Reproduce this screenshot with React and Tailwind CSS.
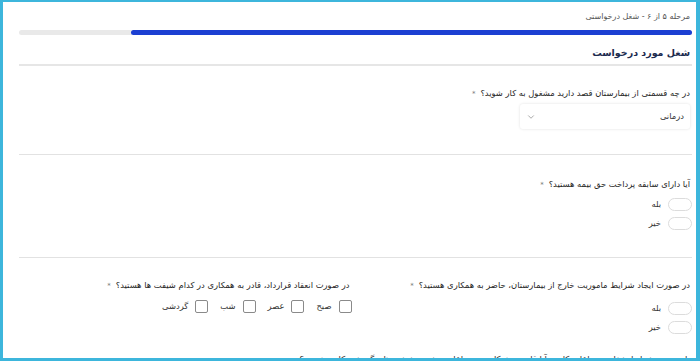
import React from "react";
import { ChevronDown } from "lucide-react";

const Star = () => <span className="text-[#777] text-[7px] mr-[5px]">*</span>;

function Question({ children }) {
  return (
    <div className="text-[8.4px] leading-[14px] text-[#262626] pr-[2px] whitespace-nowrap">
      {children}
      <Star />
    </div>
  );
}

function Radio({ label }) {
  return (
    <div className="h-[19px] flex items-center gap-[7px]">
      <span className="w-[24px] h-[13px] rounded-full border border-[#dcdcdc] bg-white" />
      <span className="text-[8.4px] text-[#333]">{label}</span>
    </div>
  );
}

function Check({ label }) {
  return (
    <div className="flex items-center gap-[7px]">
      <span className="w-[13px] h-[13px] rounded-[2px] border border-[#8a8a8a] bg-white" />
      <span className="text-[8.4px] text-[#333]">{label}</span>
    </div>
  );
}

export default function App() {
  return (
    <div
      dir="rtl"
      className="w-[700px] h-[361px] overflow-hidden bg-white border-solid border-[#3db6dc] border-l-[3px] border-t-[2px] border-r-[4px] border-b-[3px]"
      style={{ fontFamily: '"DejaVu Sans", "Noto Sans", sans-serif' }}
    >
      <div className="pl-4 pr-[4px] h-full overflow-hidden">
        <div className="pt-[8px] pr-[2px] text-[8px] leading-[14px] text-[#555]">
          مرحله ۵ از ۶ - شغل درخواستی
        </div>
        <div className="mt-[6px] h-[5px] rounded-full bg-[#e9e9e9] flex">
          <div className="w-[83.4%] h-full rounded-full bg-[#1c3fd2]" />
        </div>
        <div className="mt-[9px] pr-[2px] text-[9.5px] leading-[18px] font-bold text-[#1d2b4f]">
          شغل مورد درخواست
        </div>
        <div className="mt-[2px] h-[2px] bg-[#e6e6e6]" />

        <div className="h-[88px] pt-[20px]">
          <Question>در چه قسمتی از بیمارستان قصد دارید مشغول به کار شوید؟</Question>
          <div className="mt-[3px] w-[170px] h-[25px] mr-[2px] rounded-[3px] bg-white shadow-[0_0_3px_rgba(0,0,0,0.12)] flex items-center justify-between pr-[6px] pl-[6px]">
            <span className="text-[8.4px] text-[#333]">درمانی</span>
            <ChevronDown size={10} strokeWidth={1.5} className="text-[#777]" />
          </div>
        </div>
        <div className="h-px bg-[#e2e2e2]" />

        <div className="h-[102px] pt-[22px]">
          <Question>آیا دارای سابقه پرداخت حق بیمه هستید؟</Question>
          <div className="mt-[3px]">
            <Radio label="بله" />
            <Radio label="خیر" />
          </div>
        </div>
        <div className="h-px bg-[#e2e2e2]" />

        <div className="h-[94px] pt-[20px] grid grid-cols-2 gap-x-2">
          <div>
            <Question>در صورت ایجاد شرایط ماموریت خارج از بیمارستان، حاضر به همکاری هستید؟</Question>
            <div className="mt-[6px]">
              <Radio label="بله" />
              <Radio label="خیر" />
            </div>
          </div>
          <div>
            <Question>در صورت انعقاد قرارداد، قادر به همکاری در کدام شیفت ها هستید؟</Question>
            <div className="mt-[4px] h-[19px] flex items-center gap-[12px]">
              <Check label="صبح" />
              <Check label="عصر" />
              <Check label="شب" />
              <Check label="گردشی" />
            </div>
          </div>
        </div>
        <div className="text-[8.4px] leading-[14px] text-[#262626] pr-[2px] whitespace-nowrap">
          با توجه به شرایط شغلی و ساعات کاری، آیا قادر به همکاری در ساعات متغیر و شیفت های گردشی کاری هستید؟
        </div>
      </div>
    </div>
  );
}
